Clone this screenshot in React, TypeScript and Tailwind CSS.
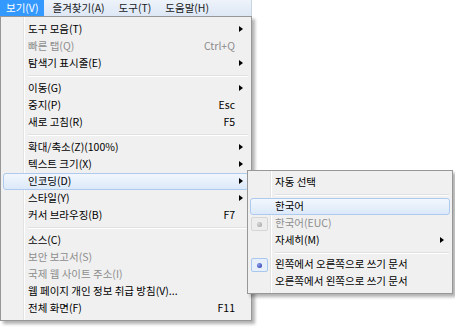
import React from "react";

type Item =
  | { sep: true }
  | {
      sep?: false;
      label: string;
      shortcut?: string;
      arrow?: boolean;
      disabled?: boolean;
      active?: boolean;
      radio?: "on" | "off";
    };

const mainItems: Item[] = [
  { label: "도구 모음(T)", arrow: true },
  { label: "빠른 탭(Q)", shortcut: "Ctrl+Q", disabled: true },
  { label: "탐색기 표시줄(E)", arrow: true },
  { sep: true },
  { label: "이동(G)", arrow: true },
  { label: "중지(P)", shortcut: "Esc" },
  { label: "새로 고침(R)", shortcut: "F5" },
  { sep: true },
  { label: "확대/축소(Z)(100%)", arrow: true },
  { label: "텍스트 크기(X)", arrow: true },
  { label: "인코딩(D)", arrow: true, active: true },
  { label: "스타일(Y)", arrow: true },
  { label: "커서 브라우징(B)", shortcut: "F7" },
  { sep: true },
  { label: "소스(C)" },
  { label: "보안 보고서(S)", disabled: true },
  { label: "국제 웹 사이트 주소(I)", disabled: true },
  { label: "웹 페이지 개인 정보 취급 방침(V)..." },
  { label: "전체 화면(F)", shortcut: "F11" },
];

const subItems: Item[] = [
  { label: "자동 선택" },
  { sep: true },
  { label: "한국어", active: true },
  { label: "한국어(EUC)", disabled: true, radio: "off" },
  { label: "자세히(M)", arrow: true },
  { sep: true },
  { label: "왼쪽에서 오른쪽으로 쓰기 문서", radio: "on" },
  { label: "오른쪽에서 왼쪽으로 쓰기 문서" },
];

// 메뉴 한 줄
const MenuRow = ({ item, sepHeight }: { item: Item; sepHeight: string }) => {
  if (item.sep) {
    return (
      <div className={`relative ${sepHeight} flex flex-col justify-center pl-[25px] pr-[1px]`}>
        <div className="h-px bg-[#e0e0e0]" />
        <div className="h-px bg-white" />
      </div>
    );
  }
  return (
    <div
      className={`relative flex h-[17px] items-center pl-[25px] pr-[14px] ${
        item.active
          ? "rounded-[3px] border border-[#aecbef] bg-gradient-to-b from-[#f2f7fd] to-[#dce9f9]"
          : "border border-transparent"
      }`}
    >
      {item.radio && (
        <div
          className={`absolute left-0 top-[1px] flex h-[14px] w-[17px] items-center justify-center rounded-[2px] border ${
            item.radio === "on"
              ? "border-[#a9c8ef] bg-[#e7effb]"
              : "border-[#d6d6d6] bg-[#ededed]"
          }`}
        >
          <div
            className={`h-[5px] w-[5px] rounded-full ${
              item.radio === "on"
                ? "bg-[radial-gradient(circle_at_35%_35%,#8a9cf0,#24339a)]"
                : "bg-[radial-gradient(circle_at_35%_35%,#d8d8d8,#9a9a9a)]"
            }`}
          />
        </div>
      )}
      <span
        className={`-ml-px whitespace-nowrap ${
          item.disabled ? "text-[#8d8d8d]" : "text-black"
        }`}
      >
        {item.label}
      </span>
      {item.shortcut && (
        <span
          className={`ml-auto -mr-px ${
            item.disabled ? "text-[#8d8d8d]" : "text-black"
          }`}
        >
          {item.shortcut}
        </span>
      )}
      {item.arrow && (
        <div className="absolute right-[5px] top-[4px] h-0 w-0 border-y-[3.5px] border-l-[4px] border-y-transparent border-l-black" />
      )}
    </div>
  );
};

const MenuPanel = ({
  items,
  className,
  sepHeight,
  pad,
}: {
  items: Item[];
  className: string;
  sepHeight: string;
  pad: string;
}) => (
  <div
    className={`relative border border-[#979797] bg-[#f0f0f0] px-[2px] ${pad} shadow-[3px_3px_3px_rgba(0,0,0,0.3)] ${className}`}
  >
    {/* 왼쪽 아이콘 영역 구분선 */}
    <div className="absolute bottom-0 left-[22px] top-0 flex">
      <div className="w-px bg-[#e2e3e3]" />
      <div className="w-px bg-white" />
    </div>
    {items.map((item, idx) => (
      <MenuRow key={idx} item={item} sepHeight={sepHeight} />
    ))}
  </div>
);

const App = () => {
  const bar = ["보기(V)", "즐겨찾기(A)", "도구(T)", "도움말(H)"];

  return (
    <div className="relative h-[329px] w-[455px] overflow-hidden bg-white font-['Noto_Sans_CJK_KR',sans-serif] text-[10.5px] leading-none">
      <div className="flex h-[16px] w-[252px] items-stretch gap-[2px] border-r border-[#c9d4e3] bg-gradient-to-b from-[#eef3fa] to-[#dde7f5]">
        {bar.map((label, idx) => (
          <div
            key={label}
            className={`flex items-center px-[6px] ${
              idx === 0 ? "bg-[#3399ff] text-white" : "text-[#1a1a1a]"
            }`}
          >
            {label}
          </div>
        ))}
      </div>

      <MenuPanel
        items={mainItems}
        className="w-[252px]"
        sepHeight="h-[8px]"
        pad="pt-[4px] pb-[3px]"
      />

      {/* 인코딩 하위 메뉴 */}
      <div className="absolute left-[247px] top-[170px]">
        <MenuPanel
          items={subItems}
          className="w-[206px]"
          sepHeight="h-[7px]"
          pad="pt-[3px] pb-[3px]"
        />
      </div>
    </div>
  );
};

export default App;
